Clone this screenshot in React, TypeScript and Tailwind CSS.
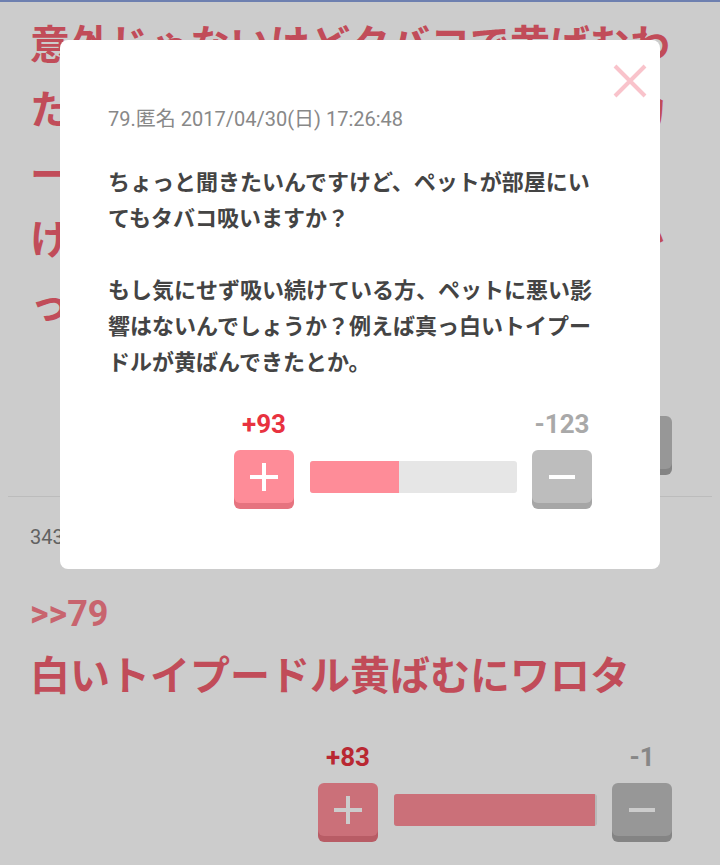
import React from "react";

type VoteProps = {
  up: number;
  down: number;
  barWidth: number;
};

// +/- vote control with a ratio bar between the two buttons
const VoteBox: React.FC<VoteProps> = ({ up, down, barWidth }) => {
  const ratio = up + down > 0 ? (up / (up + down)) * 100 : 0;

  return (
    <div className="flex items-end">
      <div className="flex flex-col items-center">
        <span className="text-[26px] leading-[28px] font-bold text-[#e8323f]">
          +{up}
        </span>
        <button className="mt-[12px] w-[60px] h-[53px] rounded-[6px] bg-[#fe8c98] shadow-[0_6px_0_#e6737f] flex items-center justify-center">
          <svg width="30" height="30" viewBox="0 0 30 30">
            <path d="M15 1v28M1 15h28" stroke="#fff" strokeWidth="4" />
          </svg>
        </button>
      </div>

      <div
        className="ml-[16px] mr-[15px] mb-[10px] h-[32px] rounded-[3px] bg-[#e6e6e6] overflow-hidden"
        style={{ width: barWidth }}
      >
        <div className="h-full bg-[#fe8c98]" style={{ width: `${ratio}%` }} />
      </div>

      <div className="flex flex-col items-center">
        <span className="text-[26px] leading-[28px] font-bold text-[#a9a9a9]">
          -{down}
        </span>
        <button className="mt-[12px] w-[60px] h-[53px] rounded-[6px] bg-[#bdbdbd] shadow-[0_6px_0_#a6a6a6] flex items-center justify-center">
          <svg width="30" height="30" viewBox="0 0 30 30">
            <path d="M2 15h26" stroke="#fff" strokeWidth="4" />
          </svg>
        </button>
      </div>
    </div>
  );
};

const firstPost = [
  "意外じゃないけどタバコで黄ばむわ",
  "たぶん。うちの親もヘビースモーカ",
  "ーで犬飼ってたけど毛が黄色っぽく",
  "けっこうなってて洗っても取れなか",
  "ったよ。壁紙もだけどね",
];

export default function App() {
  return (
    <div className="relative min-h-[865px] bg-white overflow-hidden font-['Roboto','Noto_Sans_CJK_JP',sans-serif]">
      <div className="h-[2px] bg-[#8aa0dc]" />

      {/* Post 1 */}
      <div className="pl-[30px] pr-[48px] pt-[11px] pb-[27px]">
        <div className="text-[40px] leading-[65px] font-bold text-[#f25f70] whitespace-nowrap">
          {firstPost.map((line) => (
            <div key={line}>{line}</div>
          ))}
        </div>
        <div className="mt-[38px] flex justify-end">
          <VoteBox up={12} down={8} barWidth={203} />
        </div>
      </div>

      <div className="mx-[8px] border-t border-[#ebebeb]" />

      {/* Post 2 */}
      <div className="pl-[30px] pr-[48px] pt-[28px]">
        <div className="text-[20px] leading-[24px] text-[#7a7a7a]">
          343.匿名 2017/04/30(日) 17:41:02
        </div>
        <div className="mt-[43px] text-[36px] leading-[44px] font-bold text-[#fa7d8a]">
          &gt;&gt;79
        </div>
        <div className="mt-[8px] text-[40px] leading-[65px] font-bold text-[#f25f70]">
          白いトイプードル黄ばむにワロタ
        </div>
        <div className="mt-[34px] flex justify-end">
          <VoteBox up={83} down={1} barWidth={203} />
        </div>
      </div>

      {/* Overlay */}
      <div className="absolute inset-0 bg-black/20" />

      {/* Modal */}
      <div className="absolute left-[60px] top-[40px] w-[600px] rounded-[8px] bg-white pt-[67px] pl-[48px] pr-[60px] pb-[66px]">
        <button className="absolute right-[12px] top-[23px] w-[36px] h-[36px]">
          <svg width="36" height="36" viewBox="0 0 36 36">
            <path d="M3 3l30 30M33 3L3 33" stroke="#f9c3cb" strokeWidth="4" />
          </svg>
        </button>

        <div className="text-[20px] leading-[24px] text-[#888888]">
          79.匿名 2017/04/30(日) 17:26:48
        </div>

        <div className="mt-[34px] text-[22px] leading-[36px] font-bold text-[#444444]">
          ちょっと聞きたいんですけど、ペットが部屋にいてもタバコ吸いますか？
          <br />
          <br />
          もし気にせず吸い続けている方、ペットに悪い影響はないんでしょうか？例えば真っ白いトイプードルが黄ばんできたとか。
        </div>

        <div className="mt-[29px] flex justify-end pr-[8px]">
          <VoteBox up={93} down={123} barWidth={207} />
        </div>
      </div>
    </div>
  );
}
